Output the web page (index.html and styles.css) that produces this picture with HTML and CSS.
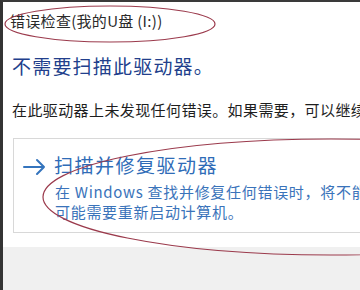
FILE: index.html
```html
<!DOCTYPE html>
<html lang="zh-CN">
<head>
<meta charset="utf-8">
<title>错误检查</title>
<link rel="stylesheet" href="styles.css">
</head>
<body>
<div class="page">
  <div class="main">
    <div class="title">错误检查(我的U盘 (I:))</div>
    <div class="heading">不需要扫描此驱动器。</div>
    <div class="body-text">在此驱动器上未发现任何错误。如果需要，可以继续扫描驱动器以查找错误。</div>
    <div class="card">
      <svg class="arrow" width="24" height="18" viewBox="0 0 24 18">
        <path d="M1 9 H21 M14 2 L21 9 L14 16" fill="none" stroke="#3474bd" stroke-width="2" stroke-linecap="round" stroke-linejoin="round"/>
      </svg>
      <div class="card-text">
        <div class="link">扫描并修复驱动器</div>
        <div class="desc">在 Windows 查找并修复任何错误时，将不能使用该驱动器。</div>
        <div class="desc">可能需要重新启动计算机。</div>
      </div>
    </div>
  </div>
  <div class="footer"></div>
  <svg class="marks" width="360" height="290" viewBox="0 0 360 290">
    <ellipse cx="110" cy="24" rx="105" ry="18" fill="none" stroke="#9b3a4c" stroke-width="1.2"/>
    <ellipse cx="331" cy="197" rx="288" ry="58" fill="none" stroke="#9b3a4c" stroke-width="1.2"/>
  </svg>
</div>
</body>
</html>
```
FILE: styles.css
```css
html, body {
  margin: 0;
  padding: 0;
  background: #ffffff;
}

.page {
  position: relative;
  width: 360px;
  height: 290px;
  box-sizing: border-box;
  border-left: 3px solid #343434;
  border-top: 2px solid #3a3a3a;
  display: flex;
  flex-direction: column;
  overflow: hidden;
  font-family: "Noto Sans CJK SC", "Noto Sans", sans-serif;
}

.main {
  background: #ffffff;
  display: flex;
  flex-direction: column;
  padding-top: 9px;
  padding-bottom: 14px;
  white-space: nowrap;
}

.title {
  font-size: 15px;
  line-height: 20px;
  letter-spacing: 0.3px;
  color: #2a2a2a;
  padding-left: 7px;
}

.heading {
  margin-top: 22px;
  font-size: 19px;
  line-height: 26px;
  letter-spacing: 1.2px;
  color: #223f8c;
  padding-left: 9px;
}

.body-text {
  margin-top: 21px;
  font-size: 15px;
  line-height: 20px;
  letter-spacing: 0.4px;
  color: #1e1e1e;
  padding-left: 9px;
}

.card {
  margin-top: 18px;
  margin-left: 10px;
  width: 400px;
  border: 1px solid #d8d8d8;
  background: #ffffff;
  padding: 13px 0 10px 9px;
  display: flex;
  gap: 7px;
  align-items: flex-start;
}

.arrow {
  margin-top: 6px;
  flex: none;
}

.card-text {
  display: flex;
  flex-direction: column;
}

.link {
  font-size: 19px;
  line-height: 26px;
  letter-spacing: 1.5px;
  color: #2f6cb7;
  margin-bottom: 4px;
}

.desc {
  font-size: 15px;
  line-height: 20px;
  letter-spacing: 0.7px;
  color: #3a73ba;
  padding-left: 1px;
}

.footer {
  flex: 1;
  background: #f0f0f0;
}

.marks {
  position: absolute;
  left: -3px;
  top: -2px;
  pointer-events: none;
}
```
